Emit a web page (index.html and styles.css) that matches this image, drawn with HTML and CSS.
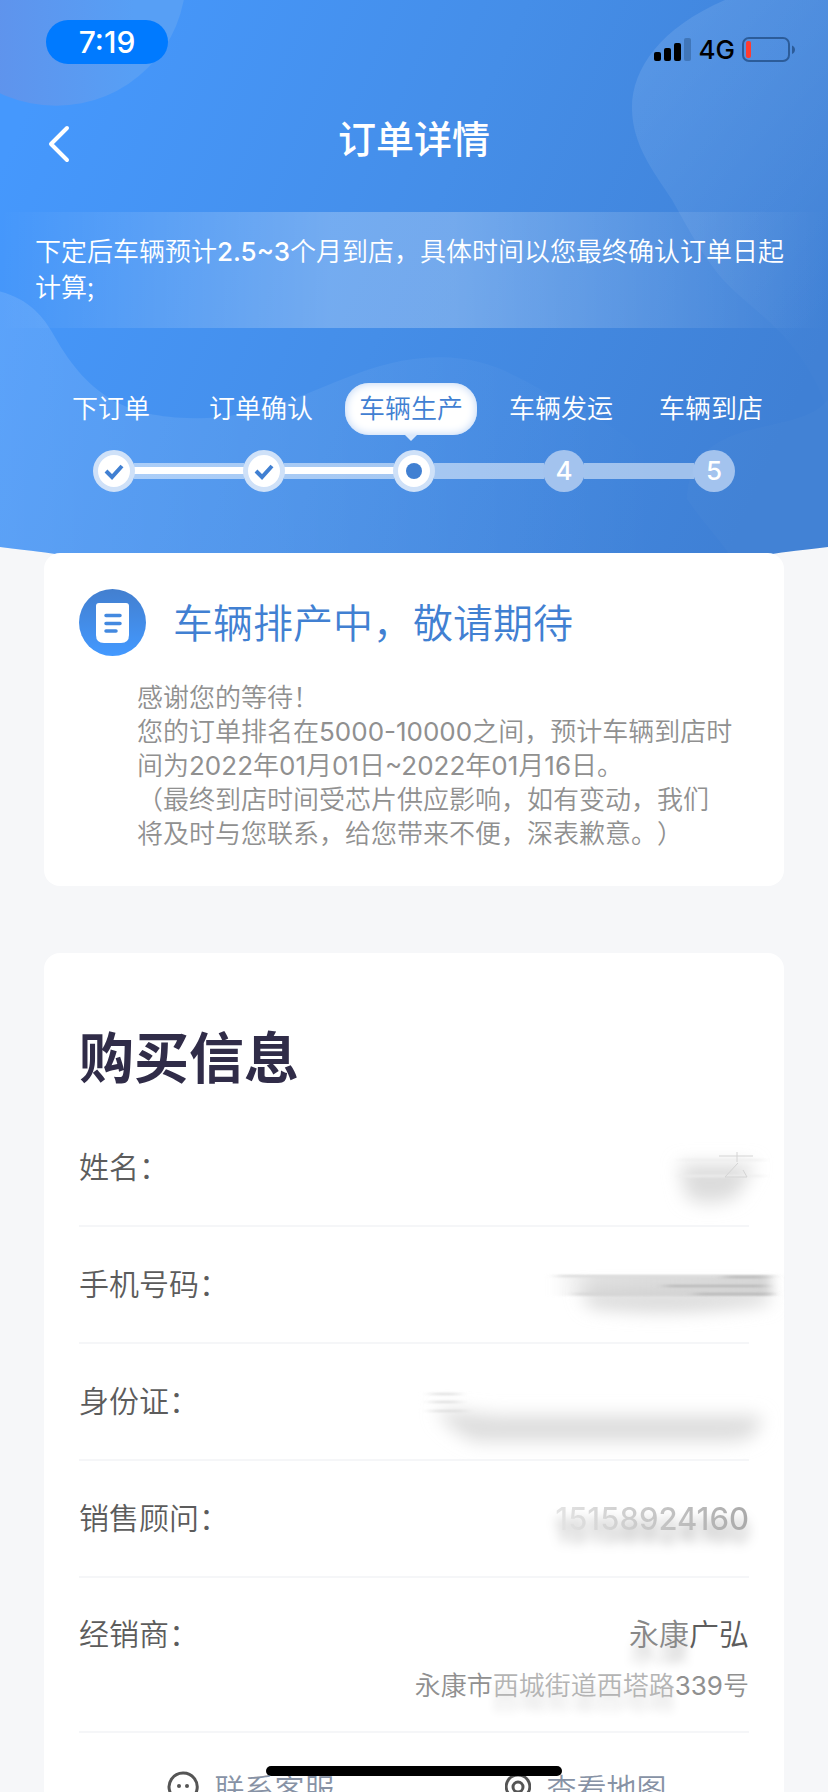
FILE: index.html
```html
<!DOCTYPE html>
<html lang="zh-CN">
<head>
<meta charset="utf-8">
<meta name="viewport" content="width=device-width, initial-scale=1">
<title>订单详情</title>
<link rel="stylesheet" href="styles.css">
</head>
<body>
<div class="screen">
  <header class="hero">
    <svg class="hero-art" viewBox="0 0 828 556" preserveAspectRatio="none" aria-hidden="true">
      <defs>
        <linearGradient id="sky" x1="0" y1="0.3" x2="1" y2="0.6">
          <stop offset="0" stop-color="#4598fd"/>
          <stop offset="0.5" stop-color="#458ee8"/>
          <stop offset="1" stop-color="#3f80d5"/>
        </linearGradient>
        <linearGradient id="orb" x1="0" y1="0" x2="1" y2="0">
          <stop offset="0.25" stop-color="#5f93ec"/>
          <stop offset="0.8" stop-color="#579ff5"/>
        </linearGradient>
        <linearGradient id="veil" x1="0" y1="0" x2="0.5" y2="1">
          <stop offset="0" stop-color="#fff" stop-opacity="0.12"/>
          <stop offset="1" stop-color="#fff" stop-opacity="0.01"/>
        </linearGradient>
        <linearGradient id="wave" x1="0" y1="0" x2="1" y2="0">
          <stop offset="0" stop-color="#fff" stop-opacity="0.12"/>
          <stop offset="0.9" stop-color="#fff" stop-opacity="0"/>
        </linearGradient>
        <clipPath id="edge"><path d="M0 0H828V548Q776 554 772 555H56Q50 554 0 548Z"/></clipPath>
      </defs>
      <g clip-path="url(#edge)">
        <rect width="828" height="556" fill="url(#sky)"/>
        <circle cx="56" cy="-24" r="130" fill="url(#orb)"/>
        <path d="M725 0C660 28 631 70 632 110C633 145 652 170 672 200C692 236 710 270 735 292C765 320 805 345 828 412V0Z" fill="url(#veil)"/>
        <path d="M0 292C30 300 44 318 54 336C90 400 130 419 200 419C300 417 350 358 440 358C500 358 530 388 580 410C640 440 680 480 730 556H0Z" fill="url(#wave)"/>
        <path d="M828 400C800 440 690 410 687 500C700 520 715 535 730 556H828Z" fill="#fff" fill-opacity="0.02"/>
      </g>
    </svg>

    <div class="status-bar">
      <span class="clock">7:19</span>
      <div class="status-icons">
        <svg class="signal" viewBox="0 0 38 24" aria-hidden="true">
          <rect x="0" y="14" width="7" height="9" rx="2"/>
          <rect x="10" y="10" width="7" height="13" rx="2"/>
          <rect x="20" y="5" width="7" height="18" rx="2"/>
          <rect x="30" y="0" width="7" height="23" rx="2" fill="#4076b9"/>
        </svg>
        <span class="network">4G</span>
        <svg class="battery" viewBox="0 0 54 26" aria-hidden="true">
          <rect x="1" y="1" width="46" height="23" rx="6" fill="none" stroke="#2c5c99" stroke-width="2"/>
          <rect x="4" y="4" width="5" height="17" rx="2" fill="#ff3b30"/>
          <path d="M50 8.500c4 1.500 4 7 0 8.500z" fill="#2c5c99"/>
        </svg>
      </div>
    </div>

    <nav class="nav-bar">
      <button class="back" type="button" aria-label="返回">
        <svg viewBox="0 0 24 40" aria-hidden="true"><path d="M20 4L4 20L20 36" fill="none" stroke="#fff" stroke-width="4" stroke-linecap="round" stroke-linejoin="round"/></svg>
      </button>
      <h1 class="nav-title">订单详情</h1>
    </nav>

    <p class="notice">下定后车辆预计<span class="num strong">2.5~3</span>个月到店，具体时间以您最终确认订单日起<br>计算;</p>

    <section class="progress" aria-label="订单进度">
      <ol class="labels">
        <li>下订单</li>
        <li>订单确认</li>
        <li class="current"><span class="bubble">车辆生产</span></li>
        <li>车辆发运</li>
        <li>车辆到店</li>
      </ol>
      <ol class="track">
        <li class="done"><span class="dot"><svg viewBox="0 0 22 18" aria-hidden="true"><path d="M3 9L9 15L19 4" fill="none" stroke="#4180d2" stroke-width="4"/></svg></span></li>
        <li class="done"><span class="dot"><svg viewBox="0 0 22 18" aria-hidden="true"><path d="M3 9L9 15L19 4" fill="none" stroke="#4180d2" stroke-width="4"/></svg></span></li>
        <li class="done"><span class="dot"><i class="core"></i></span></li>
        <li><span class="dot">4</span></li>
        <li><span class="dot">5</span></li>
      </ol>
    </section>
  </header>

  <main class="content">
    <section class="card status-card">
      <div class="status-head">
        <svg class="doc-icon" viewBox="0 0 67 67" aria-hidden="true">
          <defs><linearGradient id="disc" x1="0" y1="0" x2="0" y2="1"><stop offset="0" stop-color="#437fcf"/><stop offset="1" stop-color="#4399ff"/></linearGradient></defs>
          <circle cx="33.500" cy="33.500" r="33.500" fill="url(#disc)"/>
          <path d="M20 14H47Q50 14 50 17V46Q50 54 42 54H25Q17 54 17 46V17Q17 14 20 14Z" fill="#fff"/>
          <path d="M27 26.500H41M27 34.500H41M27 42H37" stroke="#4389e0" stroke-width="3.500" stroke-linecap="round"/>
        </svg>
        <h2 class="status-title">车辆排产中，敬请期待</h2>
      </div>
      <p class="status-text">感谢您的等待！<br>您的订单排名在<span class="num">5000-10000</span>之间，预计车辆到店时<br>间为<span class="num">2022</span>年<span class="num">01</span>月<span class="num">01</span>日<span class="num">~2022</span>年<span class="num">01</span>月<span class="num">16</span>日。<br>（最终到店时间受芯片供应影响，如有变动，我们<br>将及时与您联系，给您带来不便，深表歉意。）</p>
    </section>

    <section class="card info-card">
      <h2 class="info-title">购买信息</h2>
      <dl class="rows">
        <div class="row">
          <dt>姓名：</dt>
          <dd class="hidden-value">
            <svg viewBox="0 0 400 116" role="img" aria-label="已隐藏">
              <defs>
                <filter id="soft" filterUnits="userSpaceOnUse" x="-30" y="-20" width="460" height="160"><feGaussianBlur stdDeviation="9"/></filter>
                <filter id="fine" filterUnits="userSpaceOnUse" x="-30" y="-20" width="460" height="160"><feGaussianBlur stdDeviation="6 1"/></filter>
                <linearGradient id="fade" x1="0" y1="0" x2="1" y2="0"><stop offset="0" stop-color="#ccc" stop-opacity="0"/><stop offset="0.2" stop-color="#ccc" stop-opacity="0.6"/><stop offset="1" stop-color="#ccc" stop-opacity="0.8"/></linearGradient>
              </defs>
              <path d="M294 54H370L352 86Q326 98 302 88Z" fill="#dcdcdc" filter="url(#soft)"/>
              <path d="M296 50H378M296 66H378" stroke="#eee" stroke-width="2" filter="url(#fine)"/>
              <path d="M334 46H368M352 42V52M353 53L340 67H362L358 60" fill="none" stroke="#d4d4d4" stroke-width="1"/>
            </svg>
          </dd>
        </div>
        <div class="row">
          <dt>手机号码：</dt>
          <dd class="hidden-value">
            <svg viewBox="0 0 400 116" role="img" aria-label="已隐藏">
              <path d="M195 64H384V76Q290 90 205 80Z" fill="#d6d6d6" filter="url(#soft)"/>
              <rect x="168" y="49" width="218" height="20" fill="url(#fade)" filter="url(#fine)"/>
              <path d="M172 49H388M190 67H384" stroke="#d6d6d6" stroke-width="2" filter="url(#fine)"/>
              <path d="M280 59H380M340 50H380M310 67H384" stroke="#b4b4b4" stroke-width="2" filter="url(#fine)"/>
            </svg>
          </dd>
        </div>
        <div class="row">
          <dt>身份证：</dt>
          <dd class="hidden-value">
            <svg viewBox="0 0 400 116" role="img" aria-label="已隐藏">
              <path d="M58 66L110 72H376Q376 96 345 97H90Q70 90 52 68Z" fill="#dcdcdc" filter="url(#soft)"/>
              <path d="M46 50H74M46 58H74M46 67H80" stroke="#dcdcdc" stroke-width="2" filter="url(#fine)"/>
            </svg>
          </dd>
        </div>
        <div class="row">
          <dt>销售顾问：</dt>
          <dd class="faded num">15158924160</dd>
        </div>
        <div class="row dealer">
          <dt>经销商：</dt>
          <dd>
            <span class="dealer-name"><span class="smudged">永康</span>广弘</span>
            <span class="address">永康市<span class="washed">西城街道西塔路</span><span class="num">339</span>号</span>
          </dd>
        </div>
      </dl>
      <div class="actions">
        <button type="button">
          <svg class="chat-icon" viewBox="0 0 32 32" aria-hidden="true"><path d="M16 2a14 14 0 1 1-7 26L3 30V21A14 14 0 0 1 16 2Z" fill="none" stroke="#555" stroke-width="3"/><circle cx="12" cy="15" r="2" fill="#555"/><circle cx="20" cy="15" r="2" fill="#555"/></svg>
          联系客服
        </button>
        <button type="button">
          <svg class="pin-icon" viewBox="3 0 26 32" aria-hidden="true"><path d="M16 4a11.500 11.500 0 0 1 8 20L16 31L8 24A11.500 11.500 0 0 1 16 4Z" fill="none" stroke="#555" stroke-width="3"/><circle cx="16" cy="16" r="5" fill="none" stroke="#555" stroke-width="3"/></svg>
          查看地图
        </button>
      </div>
    </section>
  </main>
  <div class="home-indicator"></div>
</div>
</body>
</html>
```

FILE: styles.css
```css
* { box-sizing: border-box; }

body {
  margin: 0;
  background: #f6f7f9;
  color: #5c5c5c;
  font-family: "Noto Sans CJK SC", sans-serif;
  font-size: 26px;
  font-weight: 350;
  text-spacing-trim: space-all;
}

h1, h2, p, ol, dl, dd { margin: 0; padding: 0; }
ol { list-style: none; }
button { border: 0; padding: 0; background: none; font: inherit; color: inherit; }
svg { display: block; }

.num { font-family: Inter, "Noto Sans CJK SC", sans-serif; font-weight: 400; line-height: 1; }
.strong { font-weight: 500; }

.screen { height: 100vh; overflow-y: auto; scrollbar-width: none; }

/* Header */
.hero { position: relative; isolation: isolate; padding-bottom: 63px; color: #fff; }
.hero-art { position: absolute; inset: 0; z-index: -1; width: 100%; height: 100%; }

.status-bar {
  display: flex;
  justify-content: space-between;
  height: 84px;
  padding: 20px 32px 0 46px;
}
.clock {
  width: 122px;
  height: 44px;
  border-radius: 22px;
  background: #007aff;
  font: 500 30px/44px Inter, sans-serif;
  text-align: center;
}
.status-icons { display: flex; align-items: center; gap: 7px; height: 60px; color: #000; }
.signal { width: 38px; height: 24px; }
.network { font: 500 26px/30px Inter, sans-serif; }
.battery { width: 54px; height: 26px; }

.nav-bar {
  display: grid;
  grid-template-columns: 100px 1fr 100px;
  align-items: center;
  height: 112px;
  margin-bottom: 16px;
}
.back { padding: 8px 0 0 47px; }
.back svg { width: 24px; height: 40px; }
.nav-title { padding-bottom: 6px; font-size: 38px; font-weight: 500; line-height: 48px; text-align: center; }

.notice {
  padding: 20px 35px 24px;
  background: linear-gradient(90deg, rgba(255,255,255,0), rgba(255,255,255,.25) 40%, rgba(255,255,255,.25) 55%, rgba(255,255,255,0));
  line-height: 36px;
  white-space: nowrap;
}

.progress { margin-top: 55px; }
.labels, .track { display: grid; grid-template-columns: repeat(5, 1fr); }
.labels { padding: 0 42px 0 36px; line-height: 48px; text-align: center; white-space: nowrap; }
.bubble {
  position: relative;
  display: inline-block;
  height: 52px;
  padding: 0 14px;
  border-radius: 24px;
  background: #fff;
  box-shadow: inset 0 0 10px #b9d2f5;
  color: #4180d2;
}
.bubble::after {
  content: "";
  position: absolute;
  top: 100%;
  left: 50%;
  margin-left: -6px;
  border: 6px solid transparent;
  border-top-color: #dce9fa;
  border-bottom: 0;
}

.track { margin-top: 15px; padding: 0 39px; }
.track li { position: relative; display: flex; justify-content: center; }
.track li + li::before {
  content: "";
  position: absolute;
  top: 13px;
  left: calc(20px - 50%);
  width: calc(100% - 40px);
  height: 16px;
  background: rgba(255,255,255,.5);
}
.track li.done + li.done::before {
  background: linear-gradient(rgba(255,255,255,.5) 4px, #fff 4px 11px, rgba(255,255,255,.5) 11px);
}
.dot {
  display: flex;
  align-items: center;
  justify-content: center;
  width: 42px;
  height: 42px;
  border-radius: 50%;
  background: #a3c3ee;
  font: 500 26px/42px Inter, sans-serif;
  z-index: 1;
}
.done .dot { border: 5px solid #cfe1f8; background: #fff; }
.dot svg { width: 22px; height: 18px; }
.core { width: 16px; height: 16px; border-radius: 50%; background: #4180d2; }

/* Cards */
.content { position: relative; display: grid; gap: 67px; margin-top: -2px; padding: 0 44px; }
.card { border-radius: 16px; background: #fff; }
.status-card { padding: 36px 35px 37px; }
.status-head { display: flex; align-items: center; gap: 27px; }
.doc-icon { width: 67px; height: 67px; }
.status-title { padding-bottom: 4px; color: #4180d2; font-size: 40px; font-weight: 350; line-height: 60px; }
.status-text { margin-top: 23px; padding-left: 58px; color: #909090; line-height: 34px; white-space: nowrap; }

.info-card { padding: 61px 35px 40px; }
.info-title { color: #302c48; font-size: 55px; font-weight: 700; line-height: 80px; }
.rows { margin-top: 16px; font-size: 30px; line-height: 44px; }
.row {
  display: flex;
  align-items: center;
  justify-content: space-between;
  height: 117px;
  border-bottom: 2px solid #f5f6f8;
}
.row dt { padding-bottom: 6px; }
.hidden-value { width: 400px; margin-right: -36px; }
.faded {
  background: linear-gradient(90deg, #e4e4e4, #aaa);
  background-clip: text;
  color: transparent;
  font-size: 31px;
  font-weight: 500;
  filter: drop-shadow(0 12px 6px rgba(0,0,0,.3));
}
.dealer { align-items: flex-start; height: 155px; padding-top: 32px; }
.dealer dd { display: grid; justify-items: end; }
.smudged { color: #888; text-shadow: 0 16px 10px #ccc; }
.address { margin-top: 9px; color: #909090; font-size: 26px; line-height: 42px; }
.washed { color: #b4b4b4; text-shadow: 0 14px 10px #ddd; }

.actions { display: grid; grid-template-columns: 1fr 1fr; gap: 8px; padding: 32px 0 0 8px; }
.actions button {
  display: flex;
  align-items: center;
  justify-content: center;
  gap: 16px;
  color: #8792a5;
  font-size: 30px;
  line-height: 44px;
}
.chat-icon { width: 32px; height: 32px; }
.pin-icon { width: 26px; height: 32px; }

.home-indicator {
  position: fixed;
  bottom: 16px;
  left: 50%;
  width: 296px;
  height: 10px;
  margin-left: -148px;
  border-radius: 5px;
  background: #000;
}
```
